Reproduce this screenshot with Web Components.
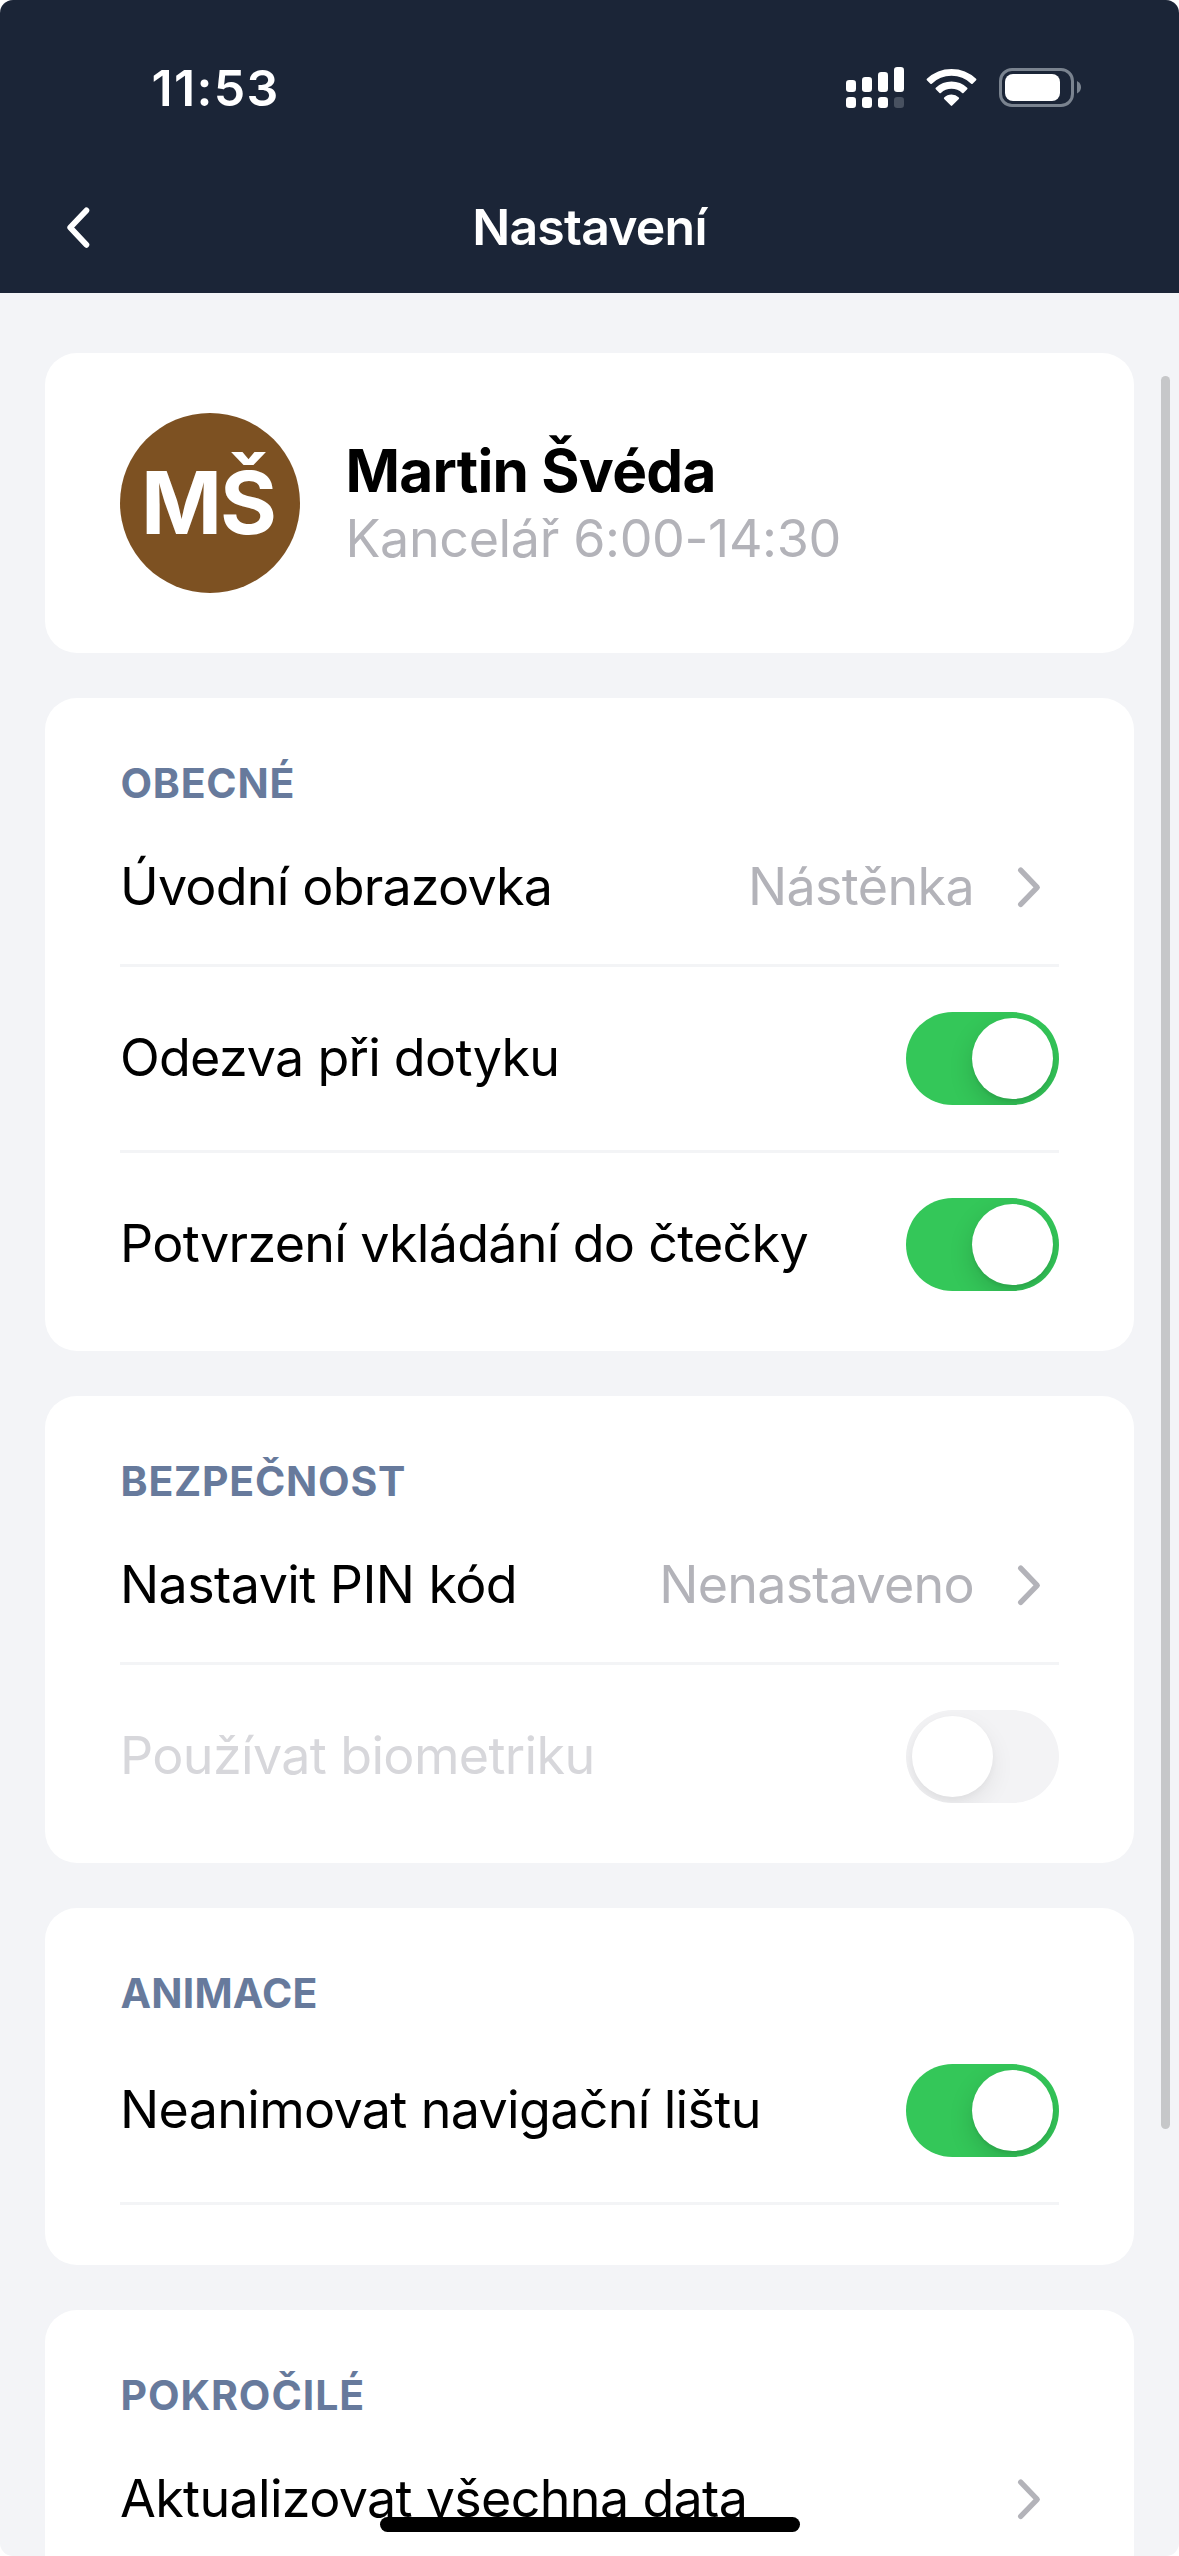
<!DOCTYPE html>
<html lang="cs">
<head>
<meta charset="utf-8">
<title>Nastavení</title>
<style>
  html, body { margin: 0; background: #fff; }
  body { width: 1179px; height: 2556px; overflow: hidden; font-family: Inter, "Liberation Sans", sans-serif; }
</style>
</head>
<body>
<settings-app>
  <status-bar slot="header" time="11:53"></status-bar>
  <nav-bar slot="header">Nastavení</nav-bar>

  <settings-card>
    <profile-summary initials="MŠ">
      <span slot="name">Martin Švéda</span>
      <span slot="detail">Kancelář 6:00-14:30</span>
    </profile-summary>
  </settings-card>

  <settings-card>
    <section-title style="letter-spacing:.75px">OBECNÉ</section-title>
    <settings-row first link style="letter-spacing:-.8px">Úvodní obrazovka<span slot="value" style="letter-spacing:-.63px">Nástěnka</span></settings-row>
    <settings-row style="letter-spacing:-.75px">Odezva při dotyku<toggle-switch slot="control" on></toggle-switch></settings-row>
    <settings-row last style="letter-spacing:-.7px">Potvrzení vkládání do čtečky<toggle-switch slot="control" on></toggle-switch></settings-row>
  </settings-card>

  <settings-card>
    <section-title style="letter-spacing:.75px">BEZPEČNOST</section-title>
    <settings-row first link style="letter-spacing:-.58px">Nastavit PIN kód<span slot="value" style="letter-spacing:-.75px">Nenastaveno</span></settings-row>
    <settings-row last disabled style="letter-spacing:-.64px">Používat biometriku<toggle-switch slot="control"></toggle-switch></settings-row>
  </settings-card>

  <settings-card>
    <section-title style="letter-spacing:.2px">ANIMACE</section-title>
    <settings-row first style="letter-spacing:-.67px">Neanimovat navigační lištu<toggle-switch slot="control" on></toggle-switch></settings-row>
  </settings-card>

  <settings-card>
    <section-title style="letter-spacing:.95px">POKROČILÉ</section-title>
    <settings-row first link style="letter-spacing:-.67px">Aktualizovat všechna data</settings-row>
  </settings-card>
</settings-app>

<script>
const define = (name, html, setup) => {
  const template = document.createElement('template');
  template.innerHTML = html;
  customElements.define(name, class extends HTMLElement {
    constructor() {
      super();
      this.attachShadow({ mode: 'open' }).append(template.content.cloneNode(true));
    }
    connectedCallback() { if (setup) setup(this, this.shadowRoot); }
  });
};

define('settings-app', `
  <style>
    :host { display: flex; flex-direction: column; position: relative; box-sizing: border-box; width: 1179px; height: 2556px; overflow: hidden; border-radius: 13px; background: #f3f4f7; }
    header { flex: none; height: 293px; background: #1b2537; color: #fff; }
    main { flex: 1; min-height: 0; overflow: hidden; display: flex; flex-direction: column; gap: 45px; padding: 60px 45px 0; }
    .scroll { position: absolute; right: 9px; top: 376px; width: 9px; height: 1753px; border-radius: 5px; background: #c6c7c9; }
    .home { position: absolute; left: 380px; bottom: 24px; width: 420px; height: 15px; border-radius: 8px; background: #000; }
  </style>
  <header><slot name="header"></slot></header>
  <main><slot></slot></main>
  <div class="scroll"></div>
  <div class="home"></div>`);

define('status-bar', `
  <style>
    :host { display: flex; align-items: center; justify-content: space-between; box-sizing: border-box; height: 175px; padding: 0 98px 0 151.5px; }
    .time { font-size: 50px; font-weight: 600; line-height: 60px; letter-spacing: 1.33px; }
    .icons { display: flex; align-items: center; gap: 22px; }
    svg { display: block; }
  </style>
  <span class="time"></span>
  <div class="icons">
    <svg width="58" height="41" viewBox="0 0 58 41" fill="#fff">
      <rect x="0" y="13" width="10" height="12" rx="3.2"/><rect x="16" y="10" width="10" height="15" rx="3.2"/>
      <rect x="32" y="5" width="10" height="20" rx="3.2"/><rect x="48" y="0" width="10" height="25" rx="3.2"/>
      <rect x="0" y="30" width="10" height="11" rx="3.2"/><rect x="16" y="30" width="10" height="11" rx="3.2"/>
      <rect x="32" y="30" width="10" height="11" rx="3.2"/><rect x="48" y="30" width="10" height="11" rx="3.2" fill="#485160"/>
    </svg>
    <svg width="51" height="39" viewBox="0 0 51 39">
      <g transform="translate(25.5 36.5)" fill="#fff" stroke="#fff" stroke-width="2" stroke-linejoin="round">
        <path d="M-23.9-25A34.5 34.5 0 0 1 23.9-25L20.4-21.5A29.5 29.5 0 0 0-20.4-21.5Z"/>
        <path d="M-15-16A21.8 21.8 0 0 1 15-16L11.3-12.3A16.6 16.6 0 0 0-11.3-12.3Z"/>
        <path d="M-6.6-6.2A9.2 9.2 0 0 1 6.6-6.2L0 .4Z"/>
      </g>
    </svg>
    <svg width="82" height="39" viewBox="0 0 82 39">
      <rect x="1.5" y="1.5" width="72" height="36" rx="11.5" fill="none" stroke="#7a838f" stroke-width="3"/>
      <rect x="6" y="6" width="55" height="27" rx="8" fill="#fff"/>
      <path d="M78 13Q82 15 82 19.3T78 25.5Z" fill="#7a838f"/>
    </svg>
  </div>`, (host, root) => { root.querySelector('.time').textContent = host.getAttribute('time'); });

define('nav-bar', `
  <style>
    :host { display: grid; grid-template-columns: 120px 1fr 120px; align-items: center; height: 103px; }
    h1 { margin: 0; font-size: 50px; font-weight: 600; line-height: 60px; letter-spacing: -.8px; text-align: center; }
    svg { display: block; margin-left: 60px; }
  </style>
  <svg width="40" height="50" viewBox="0 0 40 50" fill="none" stroke="#fff" stroke-width="5.8" stroke-linecap="round" stroke-linejoin="round"><path d="M26.4 8.4L10.2 25.6L26.4 42.8"/></svg>
  <h1><slot></slot></h1>`);

define('settings-card', `
  <style>
    :host { display: block; flex: none; box-sizing: border-box; padding: 60px 75px; border-radius: 32px; background: #fff; color: #000; }
  </style>
  <slot></slot>`);

define('profile-summary', `
  <style>
    :host { display: flex; align-items: center; gap: 45.5px; height: 180px; }
    .avatar { flex: none; display: flex; align-items: center; justify-content: center; box-sizing: border-box; width: 180px; height: 180px; padding: 0 4px 2px 0; border-radius: 50%; background: #7d5122; color: #fff; font-size: 87px; font-weight: 700; letter-spacing: -2px; line-height: 1; }
    .text { display: flex; flex-direction: column; }
    .name { font-size: 58.5px; font-weight: 700; line-height: 71px; letter-spacing: -.74px; }
    .detail { font-size: 52px; line-height: 65px; letter-spacing: -.36px; color: #b3b3b9; }
  </style>
  <div class="avatar"></div>
  <div class="text"><div class="name"><slot name="name"></slot></div><div class="detail"><slot name="detail"></slot></div></div>`,
  (host, root) => { root.querySelector('.avatar').textContent = host.getAttribute('initials'); });

define('section-title', `
  <style>
    :host { display: block; height: 50px; margin-bottom: 46px; font-size: 41px; font-weight: 700; line-height: 50px; padding-left: .5px; color: #677a9c; }
  </style>
  <slot></slot>`);

define('settings-row', `
  <style>
    :host { display: flex; align-items: center; box-sizing: content-box; padding: 45px 0; border-bottom: 3px solid #f3f4f6; font-size: 52px; line-height: 65px; white-space: nowrap; }
    :host([first]) { padding-top: 0; }
    :host([last]) { padding-bottom: 0; border-bottom: 0; }
    :host([disabled]) { color: #d7d7db; }
    .label { flex: 1; }
    :host(:not([link])) .label { padding-bottom: 2px; }
    .value { color: #b3b3b9; }
    svg { display: none; margin: 0 0 0 25px; }
    :host([link]) svg { display: block; }
  </style>
  <span class="label"><slot></slot></span>
  <span class="value"><slot name="value"></slot></span>
  <slot name="control"></slot>
  <svg width="60" height="50" viewBox="0 0 60 50" fill="none" stroke="#b3b3b9" stroke-width="5.4" stroke-linecap="round" stroke-linejoin="round"><path d="M21.7 8.2L38.2 25.3L21.7 42.4"/></svg>`);

define('toggle-switch', `
  <style>
    :host { display: flex; flex: none; box-sizing: border-box; width: 153px; height: 93px; padding: 6px; border-radius: 47px; overflow: hidden; background: #f3f3f5; }
    :host([on]) { justify-content: flex-end; background: #34c759; }
    .knob { width: 81px; height: 81px; border-radius: 50%; background: #fff; box-shadow: 0 9px 24px rgba(0,0,0,.07), 0 3px 6px rgba(0,0,0,.03); }
    :host([on]) .knob { box-shadow: 0 9px 24px rgba(0,0,0,.15), 0 3px 3px rgba(0,0,0,.06); }
  </style>
  <div class="knob"></div>`);
</script>
</body>
</html>
